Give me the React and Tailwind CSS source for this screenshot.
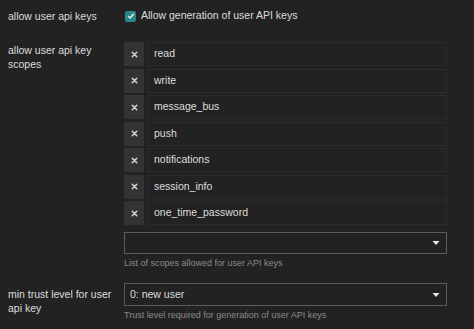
import React from 'react';

const scopes = ['read', 'write', 'message_bus', 'push', 'notifications', 'session_info', 'one_time_password'];

function Caret() {
  return (
    <svg width="8" height="6" viewBox="0 0 8 6" className="shrink-0">
      <path d="M0.5 1 H7.5 L4 5 Z" fill="#e8e8e8" />
    </svg>
  );
}

function XIcon() {
  return (
    <svg width="7" height="7" viewBox="0 0 8 8">
      <path d="M1.4 1.4 L6.6 6.6 M6.6 1.4 L1.4 6.6" stroke="#d4d4d4" strokeWidth="1.7" strokeLinecap="round" />
    </svg>
  );
}

export default function App() {
  return (
    <div
      className="w-[474px] h-[329px] bg-[#222222] text-[#dddddd] text-[10.5px] overflow-hidden"
      style={{ fontFamily: '"Liberation Sans", Arial, sans-serif' }}
    >
      {/* allow user api keys */}
      <div className="flex pt-[8px]">
        <div className="w-[124px] pl-[8px] pt-[1px] leading-[14px]">allow user api keys</div>
        <label className="flex items-center gap-[5px] h-[14px] mt-[1px]">
          <span className="w-[11px] h-[11px] rounded-[2px] bg-[#2a8686] flex items-center justify-center ml-[1px]">
            <svg width="8" height="8" viewBox="0 0 8 8">
              <path d="M1.2 4.2 L3.2 6 L6.8 1.8" stroke="#e6f3f3" strokeWidth="1.5" fill="none" />
            </svg>
          </span>
          <span>Allow generation of user API keys</span>
        </label>
      </div>

      {/* allow user api key scopes */}
      <div className="flex mt-[19px]">
        <div className="w-[124px] pl-[8px] pt-[1px] leading-[14px] pr-[4px]">allow user api key scopes</div>
        <div className="w-[323px]">
          <div className="flex flex-col gap-[2.5px]">
            {scopes.map((s) => (
              <div key={s} className="flex h-[24px] gap-[3px]">
                <button className="w-[20px] h-full bg-[#333333] flex items-center justify-center">
                  <XIcon />
                </button>
                <div className="flex-1 border border-[#2c2c2c] bg-[#222222] flex items-center pl-[6px] text-[#dddddd]">
                  {s}
                </div>
              </div>
            ))}
          </div>
          <div className="mt-[7px] h-[22px] border border-[#5c5c5c] flex items-center justify-end pr-[6px]">
            <Caret />
          </div>
          <div className="text-[9px] text-[#8a8a8a] mt-[3px] leading-[12px]">List of scopes allowed for user API keys</div>
        </div>
      </div>

      {/* min trust level */}
      <div className="flex mt-[14px]">
        <div className="w-[124px] pl-[8px] pt-[4px] leading-[14px] pr-[4px]">min trust level for user api key</div>
        <div className="w-[323px]">
          <div className="h-[23px] border border-[#5c5c5c] flex items-center justify-between pl-[5px] pr-[6px]">
            <span>0: new user</span>
            <Caret />
          </div>
          <div className="text-[9px] text-[#8a8a8a] mt-[3px] leading-[12px]">Trust level required for generation of user API keys</div>
        </div>
      </div>
    </div>
  );
}
